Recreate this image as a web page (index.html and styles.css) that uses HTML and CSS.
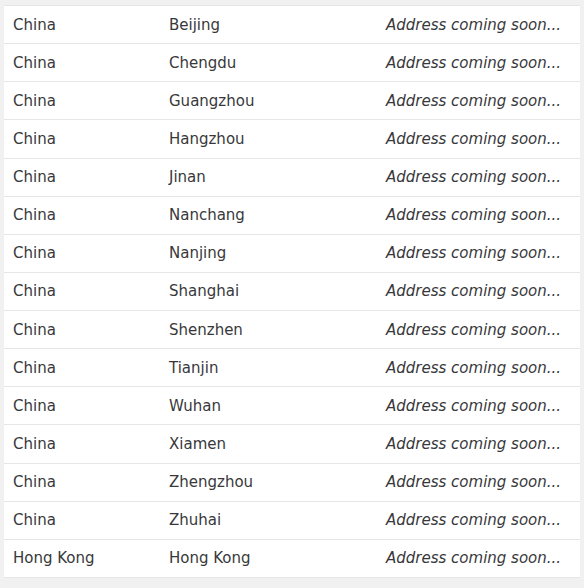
FILE: index.html
```html
<!DOCTYPE html>
<html>
<head>
<meta charset="utf-8">
<link rel="stylesheet" href="styles.css">
</head>
<body>
<div class="frame">
  <table class="offices">
    <tbody>
      <tr><td>China</td><td>Beijing</td><td class="addr">Address coming soon...</td></tr>
      <tr><td>China</td><td>Chengdu</td><td class="addr">Address coming soon...</td></tr>
      <tr><td>China</td><td>Guangzhou</td><td class="addr">Address coming soon...</td></tr>
      <tr><td>China</td><td>Hangzhou</td><td class="addr">Address coming soon...</td></tr>
      <tr><td>China</td><td>Jinan</td><td class="addr">Address coming soon...</td></tr>
      <tr><td>China</td><td>Nanchang</td><td class="addr">Address coming soon...</td></tr>
      <tr><td>China</td><td>Nanjing</td><td class="addr">Address coming soon...</td></tr>
      <tr><td>China</td><td>Shanghai</td><td class="addr">Address coming soon...</td></tr>
      <tr><td>China</td><td>Shenzhen</td><td class="addr">Address coming soon...</td></tr>
      <tr><td>China</td><td>Tianjin</td><td class="addr">Address coming soon...</td></tr>
      <tr><td>China</td><td>Wuhan</td><td class="addr">Address coming soon...</td></tr>
      <tr><td>China</td><td>Xiamen</td><td class="addr">Address coming soon...</td></tr>
      <tr><td>China</td><td>Zhengzhou</td><td class="addr">Address coming soon...</td></tr>
      <tr><td>China</td><td>Zhuhai</td><td class="addr">Address coming soon...</td></tr>
      <tr><td>Hong Kong</td><td>Hong Kong</td><td class="addr">Address coming soon...</td></tr>
    </tbody>
  </table>
</div>
</body>
</html>
```
FILE: styles.css
```css
html, body {
  margin: 0;
  padding: 0;
  background: #f1f1f2;
}
.frame {
  padding: 5px 4px 0 4px;
}
.offices {
  width: 576px;
  border-collapse: collapse;
  background: #ffffff;
  font-family: "DejaVu Sans", "Liberation Sans", sans-serif;
  font-size: 15px;
  line-height: 18px;
  color: #38383b;
  table-layout: fixed;
}
.offices td {
  padding: 9.6px 0 9.54px 9px;
  border-bottom: 1px solid #e6e6e8;
  white-space: nowrap;
  overflow: hidden;
  vertical-align: middle;
}
.offices tr:first-child td {
  border-top: 1px solid #e6e6e8;
}
.offices td:nth-child(1) { width: 147px; }
.offices td:nth-child(2) { width: 208px; }
.offices .addr {
  font-style: italic;
}
```
